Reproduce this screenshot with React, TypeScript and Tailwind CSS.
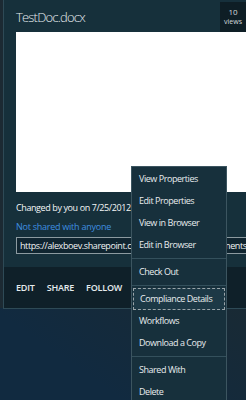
import React from "react";

const font = { fontFamily: '"Open Sans", "Noto Sans", "DejaVu Sans", sans-serif' };

function Item({ label, active }: { label: string; active?: boolean }) {
  return (
    <div
      className={
        "h-[22px] flex items-center whitespace-nowrap text-[9px] tracking-[-0.45px] text-[#e8ecee] " +
        (active ? "mx-[1px] border border-dashed border-[#9aa5aa] bg-[#1d3946] px-[6px]" : "px-[7px]")
      }
    >
      {label}
    </div>
  );
}

function Sep() {
  return <div className="h-px bg-[#34505c] my-[2px]" />;
}

export default function App() {
  return (
    <div
      className="relative w-[246px] h-[400px] overflow-hidden bg-[linear-gradient(35deg,#112a40_15%,#1a2a33_50%,#35302d_90%)]"
      style={font}
    >
      <div className="absolute left-0 top-0 w-[3px] h-[308px] bg-[#1c2a33]" />
      <div className="ml-[3px] w-[243px] border-l border-b border-[#2e4a56] bg-[#16303b] flex flex-col">
        <div className="relative h-[32px] pl-[12px] pt-[9px]">
          <div className="text-[13px] leading-[16px] text-[#e4eaee] font-light tracking-[-0.8px]">TestDoc.docx</div>
          <div className="absolute right-0 top-[2px] w-[26px] h-[30px] bg-[#0e1e25] flex flex-col items-center justify-center text-[#d4dade] leading-[10px]">
            <span className="text-[8px]">10</span>
            <span className="text-[7px]">views</span>
          </div>
        </div>
        <div className="ml-[12px] h-[160px] bg-white" />
        <div className="pl-[12px] pt-[10px] h-[75px] flex flex-col tracking-[-0.4px]">
          <div className="text-[9px] leading-[12px] text-[#f4f6f7] whitespace-nowrap">
            Changed by you on 7/25/2012 8:42 AM
          </div>
          <div className="mt-[7px] text-[9px] leading-[12px] text-[#3f8fe0] whitespace-nowrap tracking-[-0.25px]">Not shared with anyone</div>
          <div className="mt-[4px] h-[17px] border border-[#8c9aa0] border-r-0 bg-[#102530] flex items-center pl-[3px] text-[9px] text-[#f0f3f4] whitespace-nowrap overflow-hidden">
            https://alexboev.sharepoint.com/hr/Shared%20Documents/TestDoc.docx
          </div>
        </div>
        <div className="h-[41px] bg-[#0f2029] flex items-center pl-[12px] gap-[12px] text-[9px] font-semibold text-[#e6ebee] tracking-[-0.2px]">
          <span>EDIT</span>
          <span>SHARE</span>
          <span>FOLLOW</span>
        </div>
      </div>
      <div className="absolute left-[131px] top-[166px] w-[96px] h-[250px] border border-[#3c5560] bg-[#17303c] pt-[1px]">
        <Item label="View Properties" />
        <Item label="Edit Properties" />
        <Item label="View in Browser" />
        <Item label="Edit in Browser" />
        <Sep />
        <Item label="Check Out" />
        <Sep />
        <Item label="Compliance Details" active />
        <Item label="Workflows" />
        <Item label="Download a Copy" />
        <Sep />
        <Item label="Shared With" />
        <Item label="Delete" />
      </div>
    </div>
  );
}
